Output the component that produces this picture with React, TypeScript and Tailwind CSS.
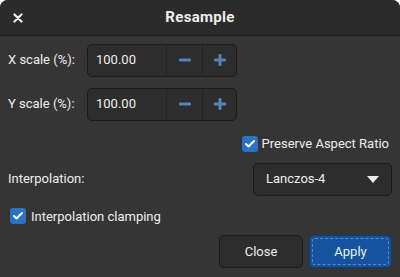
import { Check } from "lucide-react";

function SpinRow({ label }: { label: string }) {
  return (
    <div className="flex items-center h-8">
      <span className="w-[87px] pl-2">{label}</span>
      <div className="flex h-[33px] w-[150px] rounded-[5px] border border-[#1b1b1b] bg-[#2d2d2d]">
        <span className="flex w-[78px] items-center pl-[8px] text-[#eeeeec]">100.00</span>
        <span className="flex w-9 items-center justify-center border-l border-[#232323]">
          <svg width="12" height="4" viewBox="0 0 12 4">
            <rect x="0" y="0.5" width="12" height="3" rx="1" fill="#5583b8" />
          </svg>
        </span>
        <span className="flex flex-1 items-center justify-center border-l border-[#232323]">
          <svg width="12" height="12" viewBox="0 0 12 12">
            <rect x="0" y="4.5" width="12" height="3" rx="1" fill="#5583b8" />
            <rect x="4.5" y="0" width="3" height="12" rx="1" fill="#5583b8" />
          </svg>
        </span>
      </div>
    </div>
  );
}

function Box() {
  return (
    <span className="flex h-4 w-4 items-center justify-center rounded-[3px] bg-[#2a72c4]">
      <Check size={12} strokeWidth={4} color="#ffffff" />
    </span>
  );
}

export default function App() {
  return (
    <div
      className="h-[277px] w-[400px] bg-white text-[13px] text-[#eeeeec]"
      style={{ fontFamily: "Roboto, sans-serif" }}
    >
      <div className="flex h-full flex-col overflow-hidden rounded-t-[8px] bg-[#353535]">
        <div className="relative flex h-[36px] items-center justify-center border-b border-[#1b1b1b] bg-[#2b2b2b]">
          <span className="absolute left-[13px] top-[13px]">
            <svg width="10" height="10" viewBox="0 0 10 10">
              <path d="M1.5 1.5 L8.5 8.5 M8.5 1.5 L1.5 8.5" stroke="#eeeeec" strokeWidth="2.2" strokeLinecap="round" />
            </svg>
          </span>
          <span className="text-[15px] font-bold tracking-[0.3px]">Resample</span>
        </div>

        <div className="flex flex-col pt-[8px]">
          <SpinRow label="X scale (%):" />
          <div className="h-3" />
          <SpinRow label="Y scale (%):" />

          <div className="mt-[14px] flex items-center justify-end gap-[4px] pr-[11px]">
            <Box />
            <span>Preserve Aspect Ratio</span>
          </div>

          <div className="mt-[9px] flex items-center justify-between pl-2 pr-2">
            <span>Interpolation:</span>
            <div className="flex h-[33px] w-[139px] items-center justify-between rounded-[5px] border border-[#1b1b1b] bg-[#2d2d2d] pl-[12px] pr-[12px]">
              <span>Lanczos-4</span>
              <svg width="12" height="7" viewBox="0 0 12 7">
                <path d="M0 0 L12 0 L6 7 Z" fill="#eeeeec" />
              </svg>
            </div>
          </div>

          <div className="mt-[11px] flex items-center gap-[5px] pl-[10px]">
            <Box />
            <span>Interpolation clamping</span>
          </div>

          <div className="mt-[9px] flex justify-end gap-[6px] pr-2">
            <button className="flex h-[33px] w-[84px] items-center justify-center rounded-[5px] border border-[#1b1b1b] bg-[#2d2d2d]">
              Close
            </button>
            <button className="flex h-[33px] w-[83px] items-center justify-center rounded-[5px] border border-[#0f3b71] bg-[#15539e] p-[2px]">
              <span className="flex h-full w-full items-center justify-center rounded-[3px] border border-dashed border-[#5b87c0]">
                Apply
              </span>
            </button>
          </div>
        </div>
      </div>
    </div>
  );
}
